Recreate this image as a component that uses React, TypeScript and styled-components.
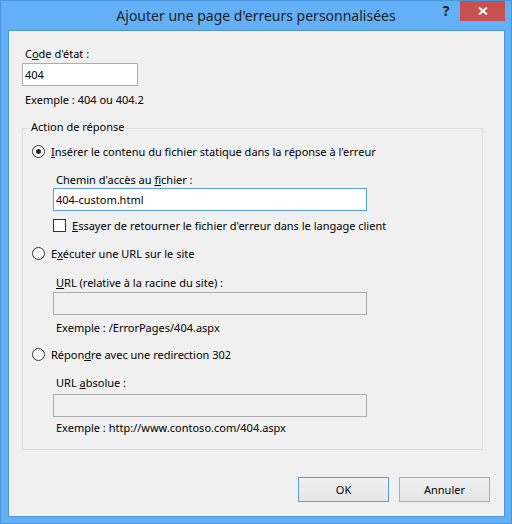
import styled, { createGlobalStyle } from "styled-components";

const GlobalStyle = createGlobalStyle`
  html, body {
    margin: 0;
    padding: 0;
  }
  body {
    font-family: "Noto Sans", "Segoe UI", sans-serif;
    font-size: 11px;
    color: #000;
  }
`;

const Frame = styled.div`
  width: 512px;
  height: 524px;
  box-sizing: border-box;
  border: 1px solid #4a95dc;
  background: #63b0f7;
  display: flex;
  flex-direction: column;
`;

const TitleBar = styled.div`
  height: 29px;
  display: grid;
  grid-template-columns: 1fr auto 1fr;
  align-items: start;
`;

const Title = styled.div`
  grid-column: 2;
  font-size: 14px;
  line-height: 29px;
  color: #222;
  white-space: nowrap;
`;

const Controls = styled.div`
  grid-column: 3;
  display: flex;
  justify-content: flex-end;
  align-items: flex-start;
  padding-right: 6px;
`;

const HelpButton = styled.div`
  width: 18px;
  margin-right: 5px;
  font-size: 14px;
  font-weight: bold;
  line-height: 19px;
  text-align: center;
  color: #222;
`;

const CloseButton = styled.div`
  width: 45px;
  height: 20px;
  background: #c75050;
  display: flex;
  align-items: center;
  justify-content: center;
`;

const Client = styled.div`
  flex: 1;
  margin: 0 6px 6px 7px;
  border: 1px solid #4f94d6;
  background: #f0f0f0;
  padding: 15px 14px 0 13px;
  display: flex;
  flex-direction: column;
`;

const Text = styled.div<{ $top: number }>`
  margin-top: ${(p) => p.$top}px;
  padding-left: 3px;
  line-height: 15px;
  white-space: nowrap;
`;

const Key = styled.span`
  text-decoration: underline;
`;

const Field = styled.input<{ $width: number; $top: number; $focused?: boolean }>`
  box-sizing: border-box;
  display: block;
  width: ${(p) => p.$width}px;
  height: 23px;
  margin: ${(p) => p.$top}px 0 0;
  padding: 0 2px;
  border: 1px solid ${(p) => (p.$focused ? "#569de5" : "#abadb3")};
  background: #fff;
  font: inherit;
  color: #000;
  outline: none;

  &:disabled {
    background: #f0f0f0;
    border-color: #adadad;
  }
`;

const Group = styled.fieldset`
  margin: 12px 7px 0 0;
  padding: 0 0 14px 9px;
  border: 1px solid #dcdcdc;
  min-width: 0;
`;

const GroupTitle = styled.legend`
  margin-left: -3px;
  padding: 0 2px 3px;
  line-height: 15px;
`;

const OptionRow = styled.div<{ $top: number }>`
  display: flex;
  align-items: center;
  gap: 6px;
  margin-top: ${(p) => p.$top}px;
  line-height: 15px;
  white-space: nowrap;
`;

const Radio = styled.span<{ $checked?: boolean }>`
  box-sizing: border-box;
  width: 13px;
  height: 13px;
  border: 1px solid #333;
  border-radius: 50%;
  background: #fff;
  display: inline-flex;
  align-items: center;
  justify-content: center;

  &::after {
    content: "";
    width: 5px;
    height: 5px;
    border-radius: 50%;
    background: ${(p) => (p.$checked ? "#222" : "transparent")};
  }
`;

const Checkbox = styled.span`
  box-sizing: border-box;
  width: 13px;
  height: 13px;
  border: 1px solid #333;
  background: #fff;
`;

const Indent = styled.div`
  margin-left: 21px;
`;

const Footer = styled.div`
  display: flex;
  justify-content: flex-end;
  gap: 10px;
  margin-top: 27px;
`;

const Button = styled.button<{ $default?: boolean }>`
  box-sizing: border-box;
  width: 91px;
  height: 25px;
  padding: 0;
  border: 1px solid ${(p) => (p.$default ? "#5a9de0" : "#acacac")};
  background: linear-gradient(#f0f0f0, #e5e5e5);
  font: inherit;
  color: #000;
`;

const App = () => {
  return (
    <>
      <GlobalStyle />
      <Frame>
        <TitleBar>
          <Title>Ajouter une page d'erreurs personnalisées</Title>
          <Controls>
            <HelpButton>?</HelpButton>
            <CloseButton>
              <svg width="10" height="8" viewBox="0 0 10 8">
                <path d="M1 0.5 L9 7.5 M9 0.5 L1 7.5" stroke="#fff" strokeWidth="2" />
              </svg>
            </CloseButton>
          </Controls>
        </TitleBar>
        <Client>
          <Text $top={0}>
            C<Key>o</Key>de d'état :
          </Text>
          <Field $top={2} $width={116} defaultValue="404" readOnly />
          <Text $top={6}>Exemple : 404 ou 404.2</Text>

          <Group>
            <GroupTitle>Action de réponse</GroupTitle>
            <OptionRow $top={7}>
              <Radio $checked />
              <span>
                <Key>I</Key>nsérer le contenu du fichier statique dans la réponse à l'erreur
              </span>
            </OptionRow>
            <Indent>
              <Text $top={13}>
                Chemin d'accès au <Key>f</Key>ichier :
              </Text>
              <Field $top={1} $width={314} $focused defaultValue="404-custom.html" readOnly />
              <OptionRow $top={7}>
                <Checkbox />
                <span>
                  <Key>E</Key>ssayer de retourner le fichier d'erreur dans le langage client
                </span>
              </OptionRow>
            </Indent>

            <OptionRow $top={13}>
              <Radio />
              <span>
                E<Key>x</Key>écuter une URL sur le site
              </span>
            </OptionRow>
            <Indent>
              <Text $top={14}>
                <Key>U</Key>RL (relative à la racine du site) :
              </Text>
              <Field $top={2} $width={314} disabled />
              <Text $top={5}>Exemple : /ErrorPages/404.aspx</Text>
            </Indent>

            <OptionRow $top={12}>
              <Radio />
              <span>
                Répon<Key>d</Key>re avec une redirection 302
              </span>
            </OptionRow>
            <Indent>
              <Text $top={13}>
                URL <Key>a</Key>bsolue :
              </Text>
              <Field $top={4} $width={314} disabled />
              <Text $top={3}>Exemple : http://www.contoso.com/404.aspx</Text>
            </Indent>
          </Group>

          <Footer>
            <Button $default>OK</Button>
            <Button>Annuler</Button>
          </Footer>
        </Client>
      </Frame>
    </>
  );
};

export default App;
